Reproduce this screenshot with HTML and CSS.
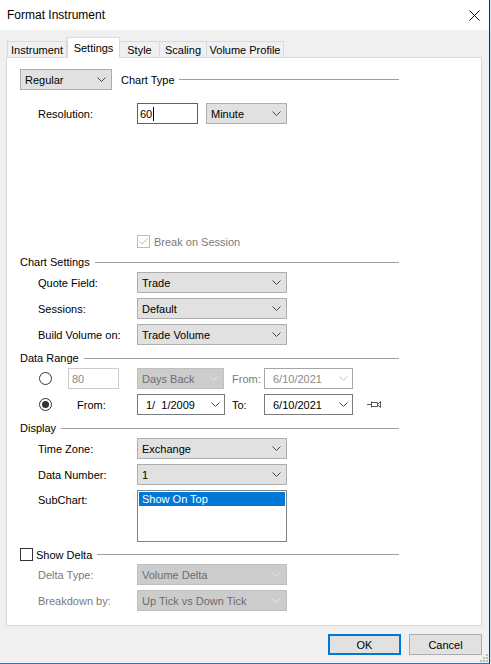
FILE: index.html
```html
<!DOCTYPE html>
<html lang="en">
<head>
  <meta charset="UTF-8">
  <title>Format Instrument</title>
  <link rel="stylesheet" href="styles.css">
</head>
<body>

<div class="dialog">
  <div class="titlebar">
    <span class="title">Format Instrument</span>
    <svg class="close" width="11" height="11" viewBox="0 0 11 11"><path d="M0.5 0.5L10.5 10.5M10.5 0.5L0.5 10.5" stroke="#111" stroke-width="1" fill="none"/></svg>
  </div>

  <div class="main">
    <div class="tabs">
      <div class="tab tab-instrument">Instrument</div>
      <div class="tab tab-settings active">Settings</div>
      <div class="tab tab-style">Style</div>
      <div class="tab tab-scaling">Scaling</div>
      <div class="tab tab-volume">Volume Profile</div>
    </div>

    <div class="panel">
      <!-- chart type -->
      <div class="head">
        <div class="combo w-regular"><span>Regular</span><svg class="chev" width="9" height="5" viewBox="0 0 9 5"><path d="M0.5 0.5L4.5 4.5L8.5 0.5" fill="none" stroke="currentColor"/></svg></div>
        <span class="head-text chart-type">Chart Type</span>
        <span class="head-line narrow"></span>
      </div>

      <div class="frow res-row">
        <span class="lbl">Resolution:</span>
        <div class="textbox focused">60<span class="caret"></span></div>
        <div class="combo w-minute"><span>Minute</span><svg class="chev" width="9" height="5" viewBox="0 0 9 5"><path d="M0.5 0.5L4.5 4.5L8.5 0.5" fill="none" stroke="currentColor"/></svg></div>
      </div>

      <div class="break-row">
        <span class="check disabled"><svg width="11" height="11" viewBox="0 0 11 11"><path d="M1.5 5.5L4 8L9.5 2.5" fill="none" stroke="#bcbcbc"/></svg></span>
        <span class="check-text muted">Break on Session</span>
      </div>

      <!-- chart settings -->
      <div class="head">
        <span class="head-text">Chart Settings</span>
        <span class="head-line"></span>
      </div>
      <div class="frow">
        <span class="lbl">Quote Field:</span>
        <div class="combo w-wide"><span>Trade</span><svg class="chev" width="9" height="5" viewBox="0 0 9 5"><path d="M0.5 0.5L4.5 4.5L8.5 0.5" fill="none" stroke="currentColor"/></svg></div>
      </div>
      <div class="frow gap">
        <span class="lbl">Sessions:</span>
        <div class="combo w-wide"><span>Default</span><svg class="chev" width="9" height="5" viewBox="0 0 9 5"><path d="M0.5 0.5L4.5 4.5L8.5 0.5" fill="none" stroke="currentColor"/></svg></div>
      </div>
      <div class="frow gap">
        <span class="lbl">Build Volume on:</span>
        <div class="combo w-wide"><span>Trade Volume</span><svg class="chev" width="9" height="5" viewBox="0 0 9 5"><path d="M0.5 0.5L4.5 4.5L8.5 0.5" fill="none" stroke="currentColor"/></svg></div>
      </div>

      <!-- data range -->
      <div class="head spaced">
        <span class="head-text">Data Range</span>
        <span class="head-line"></span>
      </div>
      <div class="dr-row">
        <span class="radio"></span>
        <div class="textbox disabled w-days">80</div>
        <div class="combo disabled w-back"><span>Days Back</span><svg class="chev" width="9" height="5" viewBox="0 0 9 5"><path d="M0.5 0.5L4.5 4.5L8.5 0.5" fill="none" stroke="currentColor"/></svg></div>
        <span class="muted">From:</span>
        <div class="date disabled w-date"><span>6/10/2021</span><svg class="chev" width="9" height="5" viewBox="0 0 9 5"><path d="M0.5 0.5L4.5 4.5L8.5 0.5" fill="none" stroke="currentColor"/></svg></div>
      </div>
      <div class="dr-row gap">
        <span class="radio on"></span>
        <span class="from-lbl">From:</span>
        <div class="date w-from"><span class="pre">1/  1/2009</span><svg class="chev" width="9" height="5" viewBox="0 0 9 5"><path d="M0.5 0.5L4.5 4.5L8.5 0.5" fill="none" stroke="currentColor"/></svg></div>
        <span>To:</span>
        <div class="date w-date"><span>6/10/2021</span><svg class="chev" width="9" height="5" viewBox="0 0 9 5"><path d="M0.5 0.5L4.5 4.5L8.5 0.5" fill="none" stroke="currentColor"/></svg></div>
        <svg class="pin" width="15" height="7" viewBox="0 0 15 7"><path d="M0 3.5H4.5M4.5 0.5V6.5M5 1.5H10.5V5.5H5M10.5 3.5L13.5 0.5V6.5Z" fill="none" stroke="#555"/></svg>
      </div>

      <!-- display -->
      <div class="head spaced">
        <span class="head-text">Display</span>
        <span class="head-line"></span>
      </div>
      <div class="frow">
        <span class="lbl">Time Zone:</span>
        <div class="combo w-wide"><span>Exchange</span><svg class="chev" width="9" height="5" viewBox="0 0 9 5"><path d="M0.5 0.5L4.5 4.5L8.5 0.5" fill="none" stroke="currentColor"/></svg></div>
      </div>
      <div class="frow gap">
        <span class="lbl">Data Number:</span>
        <div class="combo w-wide"><span>1</span><svg class="chev" width="9" height="5" viewBox="0 0 9 5"><path d="M0.5 0.5L4.5 4.5L8.5 0.5" fill="none" stroke="currentColor"/></svg></div>
      </div>
      <div class="frow gap list-row">
        <span class="lbl">SubChart:</span>
        <div class="listbox">
          <div class="item selected">Show On Top</div>
        </div>
      </div>

      <!-- delta -->
      <div class="head spaced delta-head">
        <span class="check"></span>
        <span class="head-text delta-text">Show Delta</span>
        <span class="head-line"></span>
      </div>
      <div class="frow">
        <span class="lbl muted">Delta Type:</span>
        <div class="combo disabled w-wide"><span>Volume Delta</span><svg class="chev" width="9" height="5" viewBox="0 0 9 5"><path d="M0.5 0.5L4.5 4.5L8.5 0.5" fill="none" stroke="currentColor"/></svg></div>
      </div>
      <div class="frow gap">
        <span class="lbl muted">Breakdown by:</span>
        <div class="combo disabled w-wide"><span>Up Tick vs Down Tick</span><svg class="chev" width="9" height="5" viewBox="0 0 9 5"><path d="M0.5 0.5L4.5 4.5L8.5 0.5" fill="none" stroke="currentColor"/></svg></div>
      </div>
    </div>

    <div class="footer">
      <div class="btn default">OK</div>
      <div class="btn">Cancel</div>
    </div>
  </div>

  <svg class="grip" width="9" height="9" viewBox="0 0 9 9" fill="#bcbcbc">
    <rect x="7" y="1" width="2" height="2"/>
    <rect x="4" y="4" width="2" height="2"/><rect x="7" y="4" width="2" height="2"/>
    <rect x="1" y="7" width="2" height="2"/><rect x="4" y="7" width="2" height="2"/><rect x="7" y="7" width="2" height="2"/>
  </svg>
</div>

</body>
</html>
```

FILE: styles.css
```css
body {
  margin: 0;
  width: 491px;
  height: 664px;
  overflow: hidden;
  background: #d6e4ef;
  font-family: 'Liberation Sans', Arial, sans-serif;
  font-size: 11px;
  color: #000;
}

.dialog {
  position: relative;
  width: 490px;
  height: 664px;
  box-sizing: border-box;
  background: #f0f0f0;
  border-right: 1px solid #2b2b2b;
  border-bottom: 1px solid #2a78c2;
}

.titlebar {
  height: 30px;
  background: #fff;
  display: flex;
  align-items: center;
  justify-content: space-between;
  padding: 0 9px 0 7px;
}

.title {
  font-size: 12px;
}

.main {
  padding: 7px 7px 0 6px;
}

/* tabs */
.tabs {
  display: flex;
  align-items: flex-end;
  height: 20px;
  padding-left: 1px;
}

.tab {
  box-sizing: border-box;
  height: 16px;
  display: flex;
  align-items: center;
  justify-content: center;
  background: #f0f0f0;
  border-top: 1px solid #d9d9d9;
  border-right: 1px solid #d9d9d9;
}

.tab-instrument { width: 60px; border-left: 1px solid #d9d9d9; }
.tab-settings { width: 53px; }
.tab-style { width: 40px; }
.tab-scaling { width: 47px; }
.tab-volume { width: 77px; }

.tab.active {
  position: relative;
  z-index: 1;
  height: 21px;
  margin-bottom: -1px;
  padding-bottom: 1px;
  background: #fff;
  border-left: 1px solid #d9d9d9;
}

.panel {
  box-sizing: border-box;
  width: 476px;
  height: 569px;
  background: #fff;
  border: 1px solid #d9d9d9;
  padding: 11px 0 0 13px;
}

/* section headers */
.head {
  display: flex;
  align-items: center;
  height: 20px;
  width: 379px;
}

.head:first-child {
  height: 21px;
}

.head.spaced {
  margin-top: 3px;
}

.head-line {
  flex: 1;
  height: 1px;
  background: #a0a0a0;
  margin-left: 5px;
}

.head-line.narrow {
  margin-left: 4px;
}

.chart-type {
  margin-left: 9px;
}

.delta-head {
  height: 19px;
}

.delta-text {
  margin-left: 3px;
}

/* form rows */
.frow {
  display: flex;
  align-items: center;
  height: 21px;
  padding-left: 18px;
}

.frow.gap, .dr-row.gap {
  margin-top: 5px;
}

.res-row {
  margin-top: 13px;
}

.lbl {
  width: 99px;
  flex-shrink: 0;
}

.list-row {
  align-items: flex-start;
  height: 52px;
}

.list-row .lbl {
  padding-top: 4px;
}

.muted {
  color: #7a7a7a;
}

/* controls */
.combo, .date {
  box-sizing: border-box;
  height: 21px;
  display: flex;
  align-items: center;
  justify-content: space-between;
  padding: 0 5px 0 4px;
  background: #e1e1e1;
  border: 1px solid #adadad;
  color: #000;
}

.chev {
  color: #444;
  flex-shrink: 0;
}

.combo.disabled {
  background: #cccccc;
  border-color: #bfbfbf;
  color: #6d6d6d;
}

.combo.disabled .chev {
  color: #e6e6e6;
}

.date {
  background: #fff;
  border-color: #7a7a7a;
  padding: 0 4px 0 8px;
}

.date.disabled {
  border-color: #a6a6a6;
  color: #8a8a8a;
}

.date.disabled .chev {
  color: #c2c2c2;
}

.pre {
  white-space: pre;
}

.w-regular { width: 92px; }
.w-minute { width: 81px; margin-left: 8px; }
.w-wide { width: 150px; }
.w-back { width: 87px; }
.w-date { width: 89px; }
.w-from { width: 88px; }

.textbox {
  box-sizing: border-box;
  height: 21px;
  width: 61px;
  display: flex;
  align-items: center;
  padding-left: 2px;
  background: #fff;
  border: 1px solid #7a7a7a;
}

.textbox.focused {
  border-color: #0078d7;
}

.caret {
  width: 1px;
  height: 14px;
  background: #000;
  margin-left: 1px;
}

.textbox.disabled {
  width: 51px;
  border-color: #cccccc;
  color: #8a8a8a;
  padding-left: 3px;
}

.break-row {
  display: flex;
  align-items: center;
  height: 21px;
  margin-top: 107px;
  padding-left: 117px;
}

.check {
  box-sizing: border-box;
  width: 13px;
  height: 13px;
  border: 1px solid #333;
  background: #fff;
  display: flex;
  align-items: center;
  justify-content: center;
  flex-shrink: 0;
}

.check.disabled {
  border-color: #bcbcbc;
}

.check-text {
  margin-left: 4px;
}

/* data range grid */
.dr-row {
  display: grid;
  grid-template-columns: 30px 69px 95px 32px 89px auto;
  align-items: center;
  height: 21px;
  padding-left: 18px;
}

.radio {
  box-sizing: border-box;
  width: 13px;
  height: 13px;
  margin-left: 1px;
  border: 1px solid #333;
  border-radius: 50%;
  background: #fff;
  display: flex;
  align-items: center;
  justify-content: center;
}

.radio.on::after {
  content: "";
  width: 7px;
  height: 7px;
  border-radius: 50%;
  background: #333;
}

.from-lbl {
  padding-left: 9px;
}

.pin {
  margin-left: 14px;
}

.listbox {
  box-sizing: border-box;
  width: 150px;
  height: 52px;
  padding: 1px;
  background: #fff;
  border: 1px solid #828282;
}

.item {
  height: 14px;
  line-height: 14px;
  padding-left: 3px;
}

.item.selected {
  background: #0078d7;
  color: #fff;
}

/* buttons */
.footer {
  display: flex;
  justify-content: flex-end;
  gap: 8px;
  margin-top: 8px;
}

.btn {
  box-sizing: border-box;
  width: 73px;
  height: 21px;
  display: flex;
  align-items: center;
  justify-content: center;
  background: #e1e1e1;
  border: 1px solid #adadad;
}

.btn.default {
  border: 2px solid #0078d7;
}

.grip {
  position: absolute;
  right: 1px;
  bottom: 1px;
}
```
